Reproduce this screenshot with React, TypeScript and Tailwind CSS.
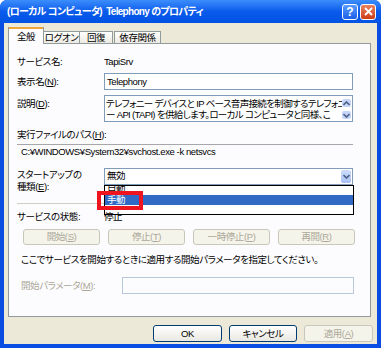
import React from 'react';

const Chevron = ({ up = false }: { up?: boolean }) => (
  <svg width="7" height="5" viewBox="0 0 7 5">
    <path
      d={up ? 'M0.5 4L3.5 1L6.5 4' : 'M0.5 1L3.5 4L6.5 1'}
      fill="none"
      stroke="#4d6185"
      strokeWidth="1.6"
    />
  </svg>
);

const Button = ({
  children,
  disabled = false,
  className = '',
}: {
  children: React.ReactNode;
  disabled?: boolean;
  className?: string;
}) => (
  <div
    className={`flex items-center justify-center rounded-[3px] border text-[9.5px] leading-none ${
      disabled
        ? 'border-[#c9c7ba] bg-[#f5f4ea] text-[#aca899]'
        : 'border-[#003c74] bg-gradient-to-b from-white to-[#e9e8e1] text-black'
    } ${className}`}
  >
    {children}
  </div>
);

const Label = ({ children, className = '' }: { children: React.ReactNode; className?: string }) => (
  <div className={`whitespace-nowrap text-[9.5px] leading-none ${className}`}>{children}</div>
);

export default function App() {
  return (
    <div className="flex h-[348px] w-[381px] flex-col rounded-t-[7px] bg-[#0a4de2] font-['Liberation_Sans','Noto_Sans_CJK_JP',sans-serif] tracking-[-0.4px] text-black [font-feature-settings:'palt']">
      {/* Title bar */}
      <div className="flex h-[23px] items-center justify-between rounded-t-[7px] bg-gradient-to-b from-[#3c8dfb] via-[#0a5bec] to-[#0253e4] pl-[7px] pr-[5px]">
        <span className="whitespace-pre text-[10px] font-bold leading-none tracking-[-0.7px] text-white">
          (ローカル コンピュータ)  Telephony のプロパティ
        </span>
        <div className="flex gap-[2px]">
          <div className="flex h-[16px] w-[16px] items-center justify-center rounded-[3px] border border-white bg-gradient-to-b from-[#5a9cff] to-[#1c5fe8] text-[12px] font-bold leading-none tracking-normal text-white">
            ?
          </div>
          <div className="flex h-[16px] w-[16px] items-center justify-center rounded-[3px] border border-white bg-gradient-to-b from-[#e9825e] to-[#cc3a12]">
            <svg width="9" height="9" viewBox="0 0 9 9">
              <path d="M1 1L8 8M8 1L1 8" stroke="white" strokeWidth="1.8" />
            </svg>
          </div>
        </div>
      </div>

      {/* Body */}
      <div className="mx-[4px] mb-[4px] flex flex-1 flex-col bg-[#ece9d8] pl-[4px] pr-[4px] pt-[4px]">
        {/* Tabs */}
        <div className="relative z-10 flex h-[16px] items-end">
          <div className="-mb-px flex h-[17px] w-[36px] flex-col border-x border-[#919b9c] bg-[#fcfcfe]">
            <div className="h-[2px] bg-[#f0a73a]" />
            <div className="flex flex-1 items-center justify-center text-[9.5px] leading-none">全般</div>
          </div>
          <div className="flex h-[12px] w-[36px] items-center justify-center whitespace-nowrap border-r border-t border-[#919b9c] bg-gradient-to-b from-white to-[#eceae2] text-[9.5px] leading-none">
            ログオン
          </div>
          <div className="flex h-[12px] w-[33px] items-center justify-center border-r border-t border-[#919b9c] bg-gradient-to-b from-white to-[#eceae2] text-[9.5px] leading-none">
            回復
          </div>
          <div className="ml-[1px] flex h-[12px] w-[47px] items-center justify-center border-x border-t border-[#919b9c] bg-gradient-to-b from-white to-[#eceae2] text-[9.5px] leading-none">
            依存関係
          </div>
        </div>

        {/* Panel */}
        <div className="relative flex h-[274px] w-[363px] flex-col border border-[#919b9c] bg-[#fcfcfe] pl-[8px]">
          <div className="mt-[10px] flex h-[16px] items-center">
            <Label className="w-[87px]">サービス名:</Label>
            <Label>TapiSrv</Label>
          </div>

          <div className="mt-[3px] flex h-[17px] items-center">
            <Label className="w-[87px]">
              表示名(<u>N</u>):
            </Label>
            <div className="flex h-[17px] w-[249px] items-center border border-[#7f9db9] bg-white pl-[2px] text-[9.5px] leading-none">
              Telephony
            </div>
          </div>

          <div className="mt-[5px] flex h-[27px] items-start">
            <Label className="mt-[4px] w-[87px]">
              説明(<u>D</u>):
            </Label>
            <div className="flex h-[27px] w-[249px] border border-[#7f9db9] bg-white">
              <div className="flex flex-1 flex-col overflow-hidden pl-[1px] pt-[2px] text-[9.5px] leading-[11px] tracking-[-0.65px]">
                <span className="whitespace-nowrap">テレフォニー デバイスと IP ベース音声接続を制御するテレフォニ</span>
                <span className="whitespace-nowrap">ー API (TAPI) を供給します。ローカル コンピュータと同様、こ</span>
              </div>
              <div className="flex w-[10px] shrink-0 flex-col gap-[4px] pt-[3px]">
                <div className="flex h-[8px] w-[9px] items-center justify-center rounded-[2px] bg-[#c6d6fa]">
                  <Chevron up />
                </div>
                <div className="flex h-[8px] w-[9px] items-center justify-center rounded-[2px] bg-[#c6d6fa]">
                  <Chevron />
                </div>
              </div>
            </div>
          </div>

          <Label className="mt-[8px]">
            実行ファイルのパス(<u>H</u>):
          </Label>
          <div className="mt-[4px] h-[15px] w-[336px] whitespace-nowrap border-t border-[#a7a6aa] pl-[4px] pt-[2px] text-[9.5px] leading-none">
            C:¥WINDOWS¥System32¥svchost.exe -k netsvcs
          </div>

          <div className="mt-[9px] flex items-start">
            <div className="w-[87px] whitespace-nowrap pt-[1px] text-[9.5px] leading-[12px]">
              スタートアップの
              <br />
              種類(<u>E</u>):
            </div>
            <div className="flex h-[17px] w-[249px] items-center border border-[#7f9db9] bg-white pl-[2px] pr-[1px]">
              <span className="flex-1 text-[9.5px] leading-none">無効</span>
              <div className="flex h-[13px] w-[10px] items-center justify-center rounded-[2px] bg-gradient-to-b from-[#cddcfc] to-[#a9c0f2]">
                <Chevron />
              </div>
            </div>
          </div>

          <div className="mt-[10px] h-px w-[336px] bg-[#d0d0bf]" />

          <div className="relative z-20 mt-[7px] flex h-[12px] items-center">
            <Label className="w-[87px]">サービスの状態:</Label>
            <Label>停止</Label>
          </div>

          <div className="ml-[6px] mt-[6px] flex gap-[8px]">
            <Button disabled className="h-[16px] w-[77px]">
              開始(<u>S</u>)
            </Button>
            <Button disabled className="h-[16px] w-[77px]">
              停止(<u>T</u>)
            </Button>
            <Button disabled className="h-[16px] w-[77px]">
              一時停止(<u>P</u>)
            </Button>
            <Button disabled className="h-[16px] w-[77px]">
              再開(<u>R</u>)
            </Button>
          </div>

          <Label className="ml-[4px] mt-[10px]">
            ここでサービスを開始するときに適用する開始パラメータを指定してください。
          </Label>

          <div className="ml-[4px] mt-[13px] flex h-[17px] items-center">
            <Label className="w-[101px] text-[#aca899]">
              開始パラメータ(<u>M</u>):
            </Label>
            <div className="h-[17px] w-[232px] border border-[#b9c9d9] bg-[#fcfcfe]" />
          </div>

          {/* Open dropdown list */}
          <div className="absolute left-[95px] top-[141px] z-10 flex h-[30px] w-[250px] flex-col border border-black bg-white">
            <div className="flex h-[8px] items-end overflow-hidden pl-[2px] text-[9.5px] leading-[10px]">自動</div>
            <div className="mt-[1px] flex h-[10px] items-center bg-[#316ac5] pl-[2px] text-[9.5px] leading-none text-white">
              手動
            </div>
          </div>

          {/* Red highlight annotation */}
          <div className="absolute left-[88px] top-[147px] z-30 h-[19px] w-[46px] border-[4px] border-[#f0141e]" />
        </div>

        {/* Dialog buttons */}
        <div className="mt-[8px] flex justify-end gap-[7px]">
          <Button className="h-[17px] w-[69px]">OK</Button>
          <Button className="h-[17px] w-[68px]">キャンセル</Button>
          <Button disabled className="h-[17px] w-[69px]">
            適用(<u>A</u>)
          </Button>
        </div>
      </div>
    </div>
  );
}
